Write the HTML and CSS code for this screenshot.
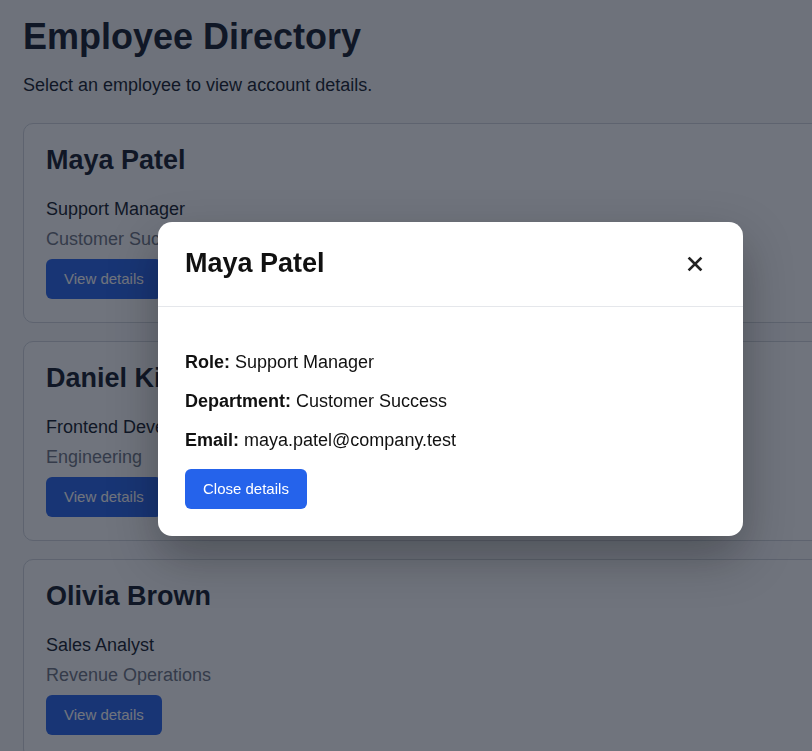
FILE: index.html
```html
<!DOCTYPE html>
<html lang="en">
<head>
    <meta charset="UTF-8">
    <meta name="viewport" content="width=device-width, initial-scale=1.0">
    <title>Employee Directory</title>
    <link rel="stylesheet" href="styles.css">
</head>
<body class="modal-open">
    <main class="page">
        <h1>Employee Directory</h1>
        <p class="intro">Select an employee to view account details.</p>

        <section class="card-list">
            <article class="card">
                <h2>Maya Patel</h2>
                <p class="role">Support Manager</p>
                <p class="dept">Customer Success</p>
                <button class="btn">View details</button>
            </article>
            <article class="card">
                <h2>Daniel Kim</h2>
                <p class="role">Frontend Developer</p>
                <p class="dept">Engineering</p>
                <button class="btn">View details</button>
            </article>
            <article class="card">
                <h2>Olivia Brown</h2>
                <p class="role">Sales Analyst</p>
                <p class="dept">Revenue Operations</p>
                <button class="btn">View details</button>
            </article>
        </section>
    </main>

    <!-- details dialog -->
    <div class="overlay">
        <div class="modal" role="dialog" aria-labelledby="modalTitle">
            <div class="modal-header">
                <h2 id="modalTitle">Maya Patel</h2>
                <button class="close-btn" aria-label="Close">
                    <svg width="16" height="16" viewBox="0 0 16 16">
                        <path d="M2.5 2.5 L13.5 13.5 M13.5 2.5 L2.5 13.5" stroke="#222" stroke-width="2.6" stroke-linecap="square"/>
                    </svg>
                </button>
            </div>
            <div class="modal-body">
                <p><strong>Role:</strong> Support Manager</p>
                <p><strong>Department:</strong> Customer Success</p>
                <p><strong>Email:</strong> maya.patel@company.test</p>
                <button class="btn">Close details</button>
            </div>
        </div>
    </div>
</body>
</html>
```

FILE: styles.css
```css
html {
    overflow: hidden;
}

body {
    margin: 0;
    font-family: "Liberation Sans", Arial, sans-serif;
    background-color: #f9fafb;
    color: #111827;
}

.page {
    width: 860px;
    padding: 16px 24px 24px 23px;
}

h1 {
    font-size: 36px;
    margin: 0 0 17px;
}

.intro {
    font-size: 18px;
    margin: 0 0 27px;
}

.card-list {
    display: flex;
    flex-direction: column;
    gap: 18px;
}

.card {
    background: #fff;
    border: 1px solid #d1d5db;
    border-radius: 10px;
    padding: 21px 22px 23px;
}

.card h2 {
    font-size: 27px;
    margin: 0 0 18px;
}

.card p {
    font-size: 18px;
    line-height: 30px;
    margin: 0;
}

.card .dept {
    color: #6b7280;
}

.btn {
    font-family: inherit;
    font-size: 15px;
    line-height: 18px;
    background-color: #2563eb;
    color: #fff;
    border: none;
    border-radius: 6px;
    padding: 10px 18px;
    cursor: pointer;
}

.card .btn {
    margin-top: 5px;
    padding: 11px 18px;
}

.overlay {
    position: fixed;
    top: 0;
    left: 0;
    width: 901px;
    height: 100%;
    padding-top: 7px;
    box-sizing: border-box;
    background: rgba(17, 24, 39, 0.6);
    display: flex;
    justify-content: center;
    align-items: center;
}

.modal {
    width: 585px;
    background: #fff;
    border-radius: 14px;
    box-shadow: 0 20px 50px rgba(0, 0, 0, 0.3);
    color: #111;
}

.modal-header {
    display: flex;
    justify-content: space-between;
    align-items: center;
    padding: 26px 34px 27px 27px;
    border-bottom: 1px solid #e5e7eb;
}

.modal-header h2 {
    font-size: 27px;
    margin: 0;
}

.close-btn {
    background: none;
    border: none;
    padding: 6px;
    display: flex;
    cursor: pointer;
}

.modal-body {
    padding: 45px 27px 27px;
}

.modal-body p {
    font-size: 18px;
    margin: 0 0 18px;
}

.modal-body .btn {
    padding: 11px 18px;
}
```
